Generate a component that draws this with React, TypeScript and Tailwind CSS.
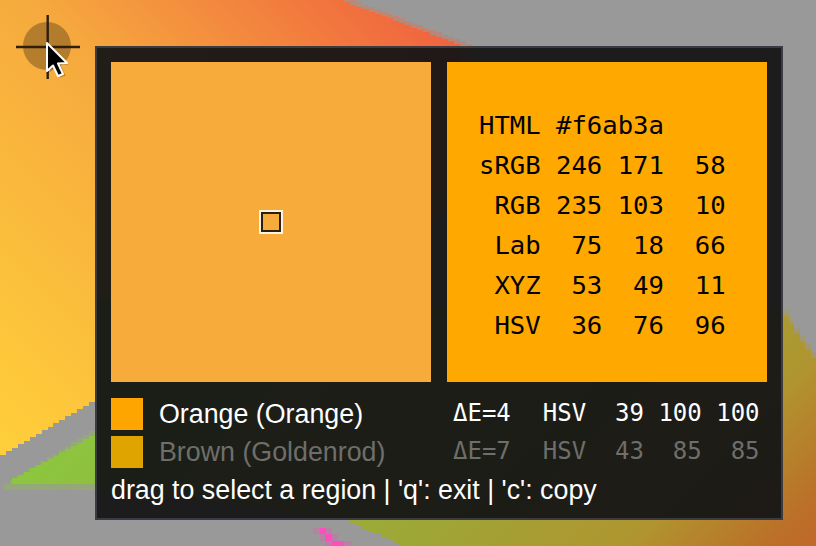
const mono = "font-['DejaVu_Sans_Mono',monospace]";

const readings = [
  "HTML #f6ab3a",
  "sRGB 246 171  58",
  " RGB 235 103  10",
  " Lab  75  18  66",
  " XYZ  53  49  11",
  " HSV  36  76  96",
];

// the screenshot behind the picker, blown up so its edges are stepped
function stairs(x0: number, y0: number, x1: number, y1: number, step: number) {
  const n = Math.round(Math.abs(x1 - x0) / step);
  let d = "";
  for (let i = 1; i <= n; i++) {
    const x = x0 + ((x1 - x0) * i) / n;
    const y = y0 + ((y1 - y0) * i) / n;
    d += `L${x.toFixed(1)} ${(y0 + ((y1 - y0) * (i - 1)) / n).toFixed(1)}L${x.toFixed(1)} ${y.toFixed(1)}`;
  }
  return d;
}

function Backdrop() {
  const top = `M0 0L338 0${stairs(338, 0, 460, 46, 6)}L460 200L95 402${stairs(95, 402, 0, 458, 6)}Z`;
  const topSoft = `M0 0L350 0${stairs(350, 0, 472, 46, 6)}L472 200L95 396${stairs(95, 396, 0, 452, 6)}Z`;
  const bottom = `M12 484L12 478${stairs(12, 478, 95, 433, 6)}L95 300L783 316${stairs(783, 316, 816, 366, 6)}L816 546L405 546${stairs(405, 546, 350, 520, 6)}L95 484Z`;
  const bottomSoft = `M4 490L4 484${stairs(4, 484, 95, 427, 6)}L95 300L783 310${stairs(783, 310, 816, 360, 6)}L816 546L412 546${stairs(412, 546, 357, 520, 6)}L95 490Z`;
  return (
    <svg className="absolute inset-0" width="816" height="546" viewBox="0 0 816 546" shapeRendering="crispEdges">
      <defs>
        <linearGradient id="warm" gradientUnits="userSpaceOnUse" x1="0" y1="450" x2="440" y2="20">
          <stop offset="0" stopColor="#ffcf3a" />
          <stop offset="0.55" stopColor="#f6a93e" />
          <stop offset="1" stopColor="#f0623e" />
        </linearGradient>
        <linearGradient id="earth" gradientUnits="userSpaceOnUse" x1="246" y1="246" x2="681" y2="681">
          <stop offset="0" stopColor="#8cc63f" />
          <stop offset="0.55" stopColor="#9fa535" />
          <stop offset="0.78" stopColor="#b0952f" />
          <stop offset="0.94" stopColor="#bb7028" />
          <stop offset="1" stopColor="#c0682a" />
        </linearGradient>
      </defs>
      <path d={topSoft} fill="url(#warm)" fillOpacity="0.35" />
      <path d={top} fill="url(#warm)" />
      <path d={bottomSoft} fill="url(#earth)" fillOpacity="0.35" />
      <path d={bottom} fill="url(#earth)" />
      <path
        d="M313 528H332V534H338V541H352V546H325V541H320V534H313Z"
        fill="#fb4fc0"
        fillOpacity="0.3"
      />
      <path d="M320 528H326V534H332V541H344V546H332V541H325V534H320Z" fill="#fb4fc0" />
    </svg>
  );
}

function Loupe() {
  return (
    <svg className="absolute left-0 top-0" width="100" height="90" viewBox="0 0 100 90">
      <circle cx="47" cy="46" r="24" fill="#000" fillOpacity="0.27" />
      <path d="M47.7 15V79M16 47H80" stroke="#2e1f0c" strokeWidth="2.4" />
      <path
        d="M48 47V71L54 65.5L59 76L64 74L59 63.5L67 63Z"
        fill="#000"
        fillOpacity="0.25"
        transform="translate(1.5 1.5)"
      />
      <path
        d="M47 43V71L53 65.5L58 76L63 74L58 63.5L67 63Z"
        fill="#000"
        stroke="#fff"
        strokeWidth="2"
        strokeLinejoin="round"
      />
    </svg>
  );
}

function Match({ swatch, name, dE, hsv, dim }: { swatch: string; name: string; dE: string; hsv: string; dim?: boolean }) {
  return (
    <div className={`flex h-8 items-center ${dim ? "text-[#6e6e6a]" : "text-white"}`}>
      <div className={`h-8 w-8 ${swatch}`} />
      <div className="ml-4 w-[294px] text-[26.8px] leading-8">{name}</div>
      <div className={`${mono} whitespace-pre pb-[2px] text-[24px] leading-8`}>{dE}</div>
      <div className={`${mono} ml-[32px] whitespace-pre pb-[2px] text-[24px] leading-8`}>{hsv}</div>
    </div>
  );
}

export default function App() {
  return (
    <div className="relative h-[546px] w-[816px] overflow-hidden bg-[#999999] font-['Liberation_Sans',sans-serif]">
      <Backdrop />
      <div className="relative ml-[95px] mt-[46px] inline-block h-[474px] w-[688px] border-2 border-[#3b3b43] bg-[#151515]/95 p-[14px]">
        <div className="flex gap-4">
          <div className="flex h-80 w-80 items-center justify-center bg-[#f6ab3a]">
            <div className="border-2 border-[#fff3e0]">
              <div className="h-5 w-5 border-2 border-[#2a2010]" />
            </div>
          </div>
          <div className={`${mono} flex h-80 w-80 flex-col justify-center bg-[#ffa800] pl-8 pt-[6px] text-[25.6px] leading-10 text-black`}>
            {readings.map((line) => (
              <div key={line} className="whitespace-pre">
                {line}
              </div>
            ))}
          </div>
        </div>
        <div className="mt-4 flex flex-col gap-[6px]">
          <Match swatch="bg-[#ffa500]" name="Orange (Orange)" dE="ΔE=4" hsv="HSV  39 100 100" />
          <Match swatch="bg-[#e0a400]" name="Brown (Goldenrod)" dE="ΔE=7" hsv="HSV  43  85  85" dim />
        </div>
        <div className="mt-[6px] text-[26.8px] leading-8 text-white">drag to select a region | 'q': exit | 'c': copy</div>
      </div>
      <Loupe />
    </div>
  );
}
